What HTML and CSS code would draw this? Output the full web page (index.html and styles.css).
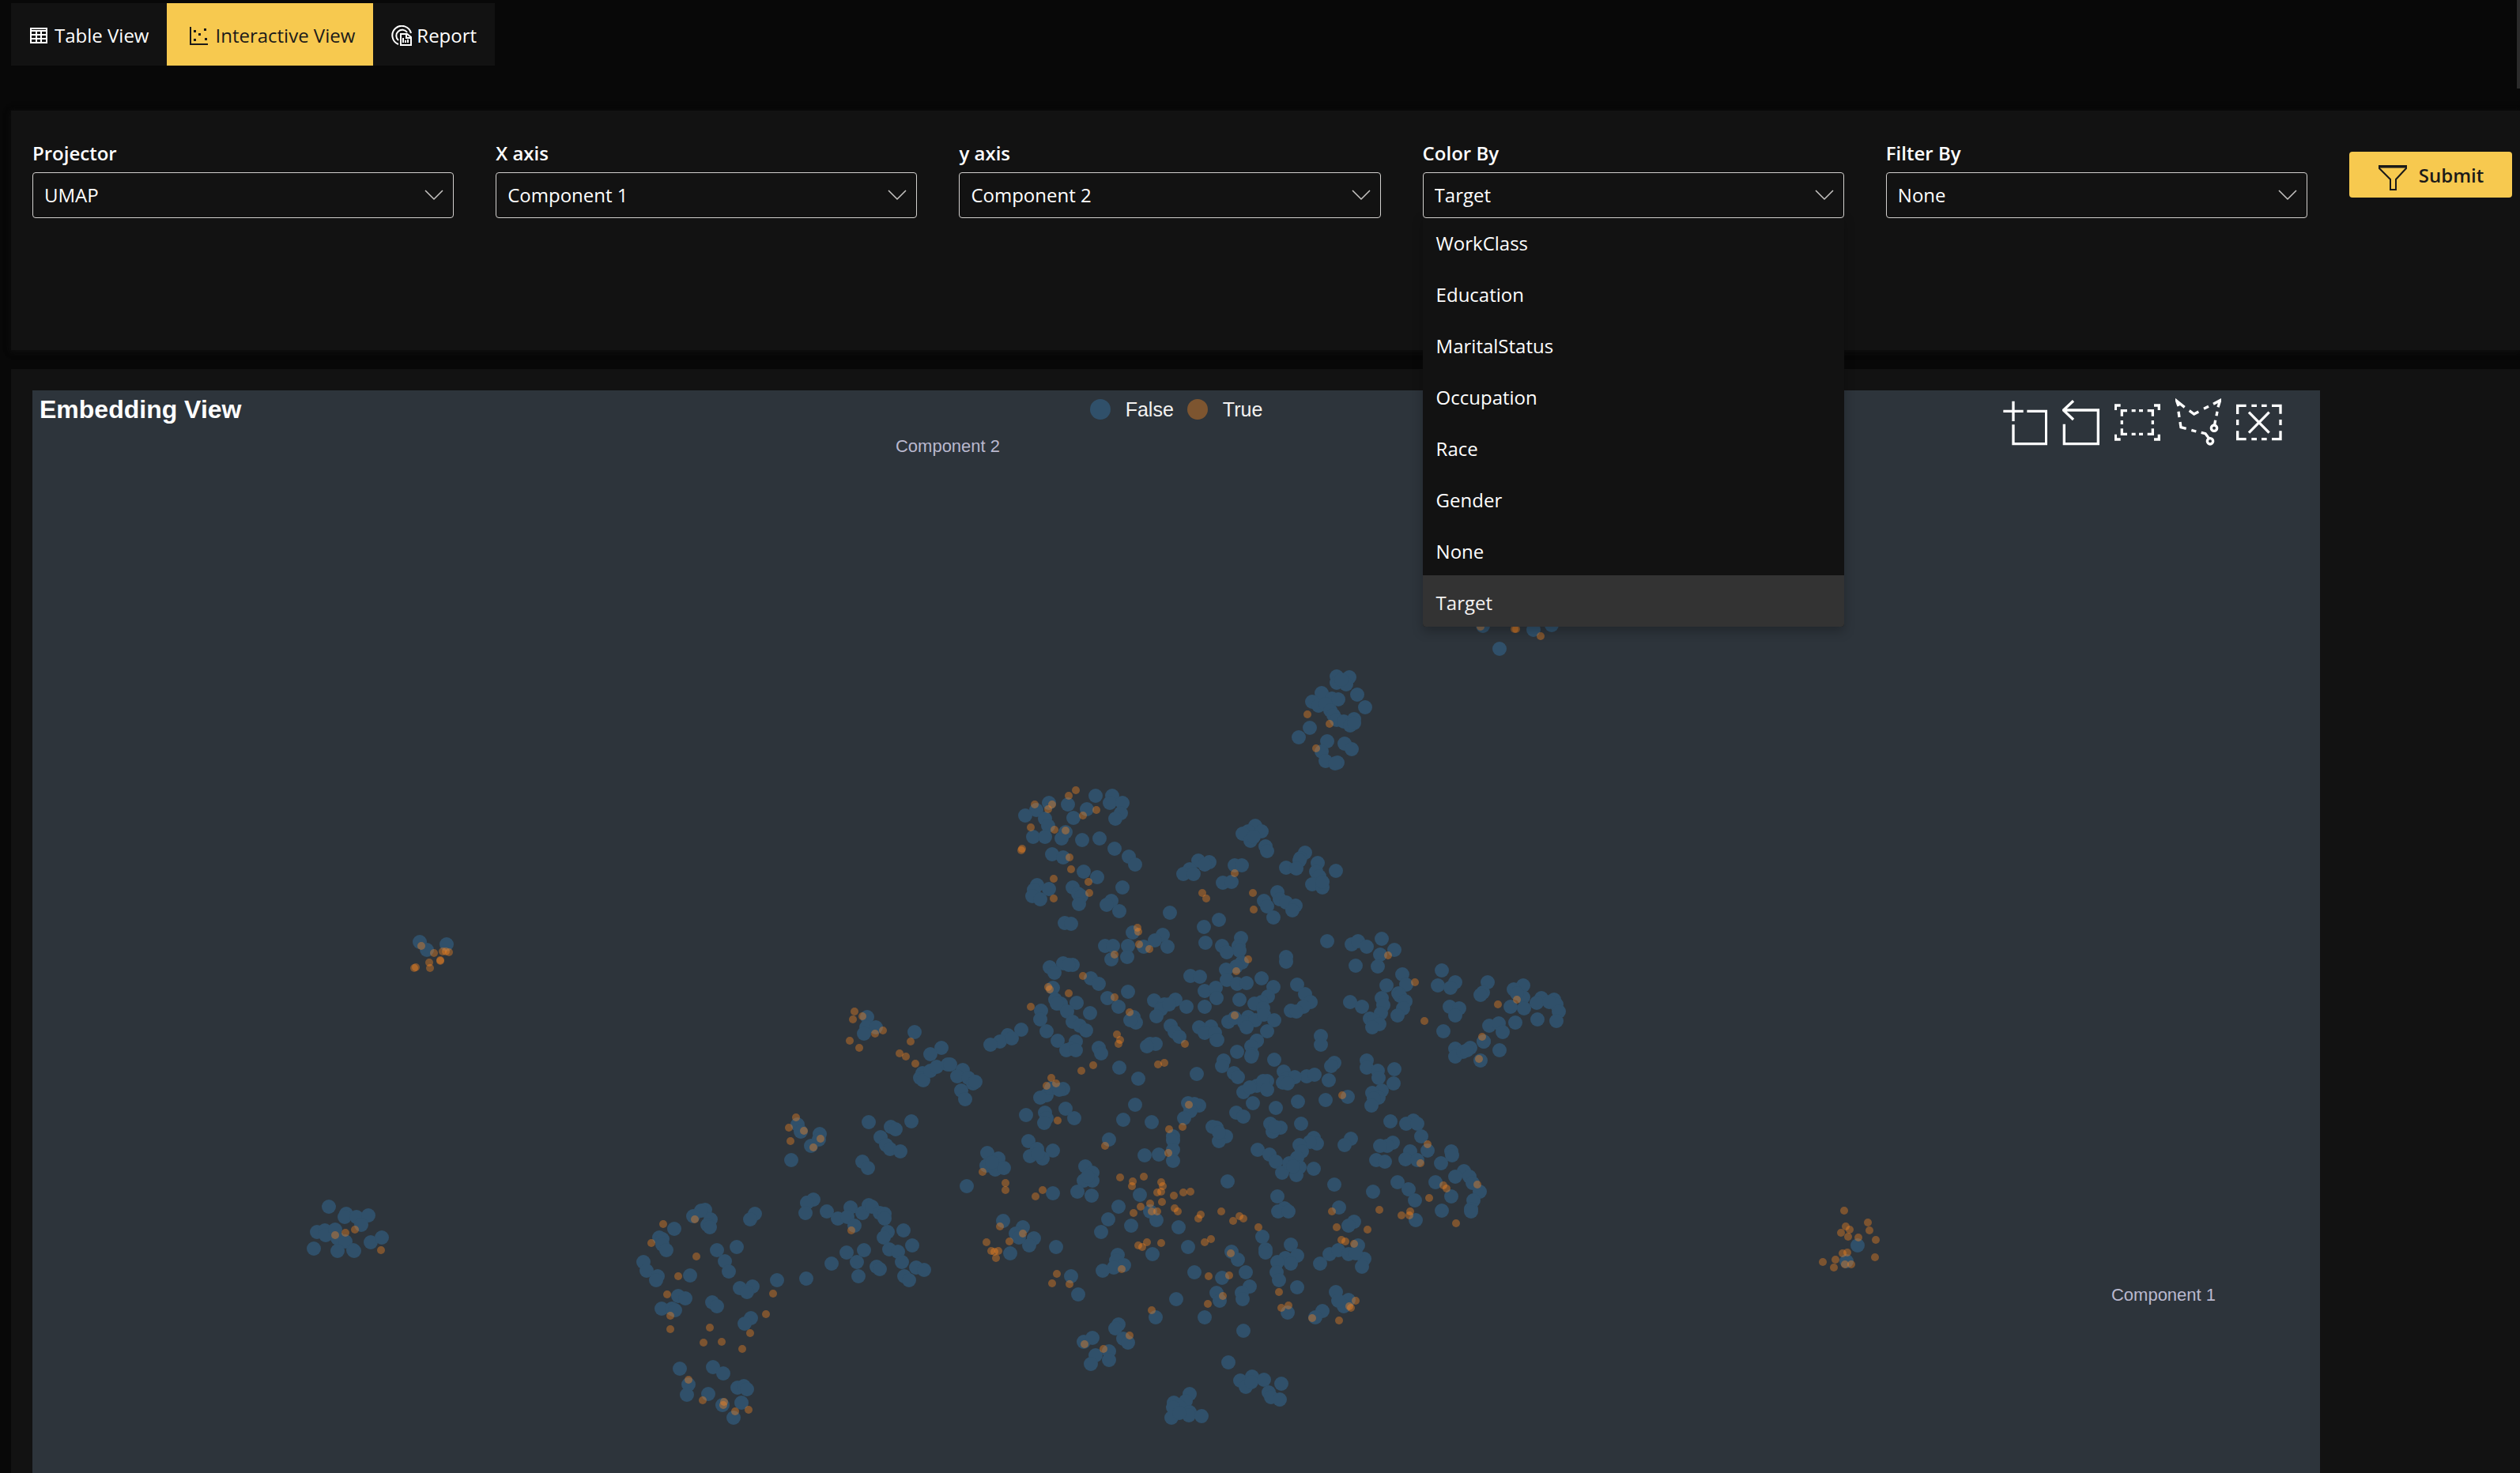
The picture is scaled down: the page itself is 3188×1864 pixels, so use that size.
FILE: index.html
```html
<!DOCTYPE html>
<html lang="en">
<head>
<meta charset="utf-8">
<title>Embedding View</title>
<link rel="stylesheet" href="styles.css">
</head>
<body>
<nav class="tabs" aria-label="Views">
  <button class="tab" type="button">
    <svg class="tab-icon" viewBox="0 0 26 26"><path d="M2 4h20v18H2zM2 7h20M2 12h20M2 17h20M9 7v15M15 7v15" fill="none" stroke="currentColor" stroke-width="2"/></svg>
    Table View
  </button>
  <button class="tab tab-active" type="button">
    <svg class="tab-icon tab-icon-wide" viewBox="-2 0 32 26"><path d="M5 2v22h22" fill="none" stroke="currentColor" stroke-width="2"/><path d="M9 6h3v3H9zM22 4h3v3h-3zM15 10h3v3h-3zM9 17h3v3H9zM23 16h3v3h-3z" fill="currentColor"/></svg>
    Interactive View
  </button>
  <button class="tab" type="button">
    <svg class="tab-icon" viewBox="0 0 26 26"><g fill="none" stroke="currentColor" stroke-width="2"><path d="M9 24A12 12 0 1 1 25 10"/><path d="M9 19A7.500 7.500 0 1 1 20 9"/><path d="M12 11h8l5 4v10H12z"/><path d="M19 11v5h6M15 22v-6M18 22v-3M21 22v-4"/></g></svg>
    Report
  </button>
</nav>

<form class="panel controls">
  <div class="field">
    <label for="projector">Projector</label>
    <div class="select"><select id="projector"><option>UMAP</option></select><svg viewBox="0 0 24 14"><path d="M1 1l11 11L23 1"/></svg></div>
  </div>
  <div class="field">
    <label for="x-axis">X axis</label>
    <div class="select"><select id="x-axis"><option>Component 1</option></select><svg viewBox="0 0 24 14"><path d="M1 1l11 11L23 1"/></svg></div>
  </div>
  <div class="field">
    <label for="y-axis">y axis</label>
    <div class="select"><select id="y-axis"><option>Component 2</option></select><svg viewBox="0 0 24 14"><path d="M1 1l11 11L23 1"/></svg></div>
  </div>
  <div class="field">
    <label for="color-by">Color By</label>
    <div class="select"><select id="color-by"><option>Target</option></select><svg viewBox="0 0 24 14"><path d="M1 1l11 11L23 1"/></svg>
      <ul class="menu" role="listbox" aria-label="Color By">
        <li role="option">WorkClass</li>
        <li role="option">Education</li>
        <li role="option">MaritalStatus</li>
        <li role="option">Occupation</li>
        <li role="option">Race</li>
        <li role="option">Gender</li>
        <li role="option">None</li>
        <li role="option" aria-selected="true">Target</li>
      </ul>
    </div>
  </div>
  <div class="field">
    <label for="filter-by">Filter By</label>
    <div class="select"><select id="filter-by"><option>None</option></select><svg viewBox="0 0 24 14"><path d="M1 1l11 11L23 1"/></svg></div>
  </div>
  <button class="submit" type="submit">
    <svg viewBox="0 0 38 34"><path d="M2 2h34v3L23 19v13h-7V19L2 5z" fill="none" stroke="currentColor" stroke-width="2"/><path d="M1 3h36" stroke="currentColor" stroke-width="3"/></svg>
    Submit
  </button>
</form>

<main class="panel view">
  <section class="chart" aria-labelledby="chart-title">
    <svg class="plot" viewBox="0 0 2894 1370" role="img" aria-label="Scatter plot of component 1 against component 2">
      <g id="series-false" class="series-false"></g>
      <g id="series-true" class="series-true"></g>
      <text class="axis-name" x="1158" y="78" text-anchor="middle">Component 2</text>
      <text class="axis-name" x="2696" y="1152" text-anchor="middle">Component 1</text>
    </svg>
    <header class="chart-head">
      <h1 id="chart-title">Embedding View</h1>
      <div class="legend">
        <span class="key"><i class="dot dot-false"></i>False</span>
        <span class="key"><i class="dot dot-true"></i>True</span>
      </div>
      <div class="toolbox">
        <button type="button" aria-label="Zoom"><svg width="56" height="60" viewBox="159 72 168 180"><path d="M160 121h76M198 83v76M250 121h73v124H198v-73"/></svg></button>
        <button type="button" aria-label="Zoom reset"><svg width="47" height="60" viewBox="386 72 141 180"><path d="M428 82l-38 35 38 36M390 117h132v128H393v-75"/></svg></button>
        <button type="button" aria-label="Box select"><svg width="58" height="60" viewBox="586 72 174 180"><path d="M590 117V99h19M736 99h19v18M755 209v19h-19M609 228h-19v-19M614 140v-21h20M711 119h20v21M731 187v21h-20M634 208h-20v-21M651 119h15M679 119h15M651 208h15M679 208h15M614 156v15M731 156v15"/></svg></button>
        <button type="button" aria-label="Lasso select"><svg width="58" height="60" viewBox="817 72 174 180"><path d="M829 102l-7-20 30 24M870 119l18 13 17-9M925 112l18-9M961 94l26-14-8 26M976 122l-3 17M969 155l-3 17M829 122l3 22M835 162l3 20 20 5M878 193l18 5M915 202l16 4 15 20"/><circle cx="964" cy="185" r="11"/><circle cx="949" cy="235" r="11"/></svg></button>
        <button type="button" aria-label="Clear selection"><svg width="58" height="60" viewBox="1049 72 174 180"><path d="M1054 132v-32h33M1184 100h33v31M1217 196v31h-33M1087 227h-33v-31M1107 100h20M1145 100h20M1107 227h20M1145 227h20M1054 153v21M1217 153v21M1097 125l77 78M1174 125l-77 78"/></svg></button>
      </div>
    </header>
  </section>
</main>
<script src="plot.js"></script>
</body>
</html>
```
FILE: styles.css
```css
* { box-sizing: border-box; }

body {
  margin: 0;
  padding: 4px 0 0 14px;
  background: #080808;
  color: #fff;
  font: 24px/32px "Open Sans", "Noto Sans", sans-serif;
  overflow-x: hidden;
}

body::after {
  content: "";
  position: fixed;
  top: 0;
  right: 0;
  width: 4px;
  height: 112px;
  background: #2b2b2b;
}

button, select { font: inherit; color: inherit; }

.tabs { display: flex; margin-bottom: 57px; }

.tab {
  display: flex;
  align-items: center;
  gap: 6px;
  height: 79px;
  padding: 2px 23px 0;
  border: 0;
  background: #121212;
}

.tab-active { background: #f7c94f; color: #1b1a19; }
.tab-icon { width: 26px; height: 26px; }
.tab-icon-wide { width: 32px; }

.panel { background: #121212; }

.controls {
  display: flex;
  align-items: flex-start;
  gap: 53px;
  height: 303px;
  margin-bottom: 24px;
  padding: 36px 10px 0 27px;
  box-shadow: 0 3px 7px #0d0d0d, 0 0 8px #0d0d0d;
}

.field { flex: 1; min-width: 0; }
.field label { display: block; height: 42px; font-weight: 600; line-height: 36px; }

.select { position: relative; display: grid; align-items: center; }
.select > select, .select > svg { position: relative; z-index: 3; grid-area: 1 / 1; }

.select select {
  width: 100%;
  height: 58px;
  padding: 0 14px;
  border: 1px solid #d2d0ce;
  border-radius: 4px;
  background: #121212;
  appearance: none;
}

.select > svg {
  justify-self: end;
  width: 24px;
  height: 14px;
  margin-right: 13px;
  fill: none;
  stroke: #c8c6c4;
  stroke-width: 1.5;
  pointer-events: none;
}

.menu {
  position: absolute;
  top: 55px;
  left: 0;
  z-index: 2;
  width: 100%;
  margin: 0;
  padding: 0;
  list-style: none;
  border-radius: 0 0 4px 4px;
  background: #121212;
  box-shadow: 0 6px 14px rgba(0, 0, 0, 0.25);
  overflow: hidden;
}

.menu li { height: 65px; padding: 3px 17px 0; line-height: 64px; }
.menu li[aria-selected] { background: #333; color: #f3f2f1; }

.submit {
  display: flex;
  align-items: center;
  justify-content: center;
  gap: 14px;
  width: 206px;
  height: 58px;
  margin-top: 16px;
  padding: 2px 0 0;
  border: 0;
  border-radius: 4px;
  background: #f7c94f;
  color: #1b1a19;
  font-weight: 600;
}
.submit svg { width: 38px; height: 34px; margin-top: 6px; }

.view { padding: 27px 253px 0 27px; }

.chart {
  display: grid;
  background: #2d343b;
  font-family: "Liberation Sans", Arial, sans-serif;
}
.plot, .chart-head { grid-area: 1 / 1; }
.plot { display: block; width: 100%; }

.chart-head {
  display: grid;
  grid-template-columns: 1fr auto 1fr;
  align-self: start;
  align-items: start;
  padding: 8px 48px 0 9px;
}
.chart-head h1 { margin: 0; font-size: 32px; line-height: 32px; }

.legend {
  display: flex;
  gap: 17px;
  margin-left: 39px;
  font-size: 25px;
  line-height: 32px;
  color: #f3f2f1;
}
.key { display: flex; align-items: center; gap: 19px; }
.dot { width: 26px; height: 26px; border-radius: 50%; }
.dot-false { background: #30506a; }
.dot-true { background: #7d5530; }

.toolbox { display: flex; justify-content: flex-end; gap: 19px; padding-top: 2px; }
.toolbox button { display: flex; padding: 0; border: 0; background: none; }
.toolbox svg { fill: none; stroke: #fff; stroke-width: 10; }

.series-false { fill: #30506a; }
.series-true { fill: #ff8a20; fill-opacity: 0.38; }
.axis-name { font-size: 22px; fill: #b9b8ce; }
```
FILE: plot.js
```js
// Embedded samples, grouped by cluster. Each group has its own origin and scale.
const groups = [
  { x: 1159, y: 286, sx: 1.96, sy: 2.8,
    no: "1325,34 1450,47 1496,30 1367,114 963,212 993,216 962,234 985,240 974,225 1013,278 1032,321 926,271 902,301 950,290 966,295 917,317 935,310 947,332 955,350 962,368 980,372 1005,363 996,386 1006,378 895,394 868,429 939,441 982,450 1000,470 926,480 935,511 965,517 959,521 248,660 295,666 364,636 405,636 399,660 432,661 343,684 427,697 414,718 310,713 217,687 190,705 239,716 247,742 290,765 209,782 239,781 281,787 332,791 375,787 412,824 257,843 285,853 446,852 462,878 336,904 368,924 220,951 249,965 212,970 208,991 228,1002 307,961 322,982 330,992 323,1018 432,960 404,1008 392,1022 423,1043 289,1085 303,1090 760,742 743,761 777,762 729,771 748,796 757,780 786,816 789,832 620,865 646,870 636,880 597,895 583,914 608,914 709,882 728,881 680,943 702,942 883,836 873,857 870,865 836,889 862,893 915,874 911,905 961,901 920,922 902,949 927,960 928,940 816,978 783,1009 789,1028 822,1003 837,1013 860,1025 853,1042 805,1067 548,1049 456,1119 531,1127 511,1148 542,1170 388,1168 407,1168 444,1168 484,1171 442,1207 403,1216 671,1074 634,1100 637,1157 678,1168 725,1140 720,1168 722,1185 690,1190 727,1226 714,1240 687,1252 690,1288 938,1151 836,1207 837,1224 1000,1161 1015,1151 1037,1169 1074,1142 1105,1182 1071,1197 1009,1237 1065,1240 285,1229 308,1234 298,1234 251,1244 263,1262 352,1283 373,1303 258,1317 444,1330 393,1353 421,1382 317,1369 264,1358 278,1373 268,1371 294,1400 350,1406 230,1398 228,1428 308,1435 325,1450 244,1469 341,1466 180,1465 147,1484 127,1505 104,1517 157,1494 599,1273 624,1276 776,1282 716,1302 738,1298 635,1327 663,1315 665,1351 806,1313 636,1384 722,1357 791,1347 776,1367 759,1373 780,1390 864,1305 884,1339 897,1367 880,1382 849,1397 862,1400 510,1362 562,1358 535,1374 528,1392 547,1375 590,1383 516,1418 458,1420 465,1438 450,1430 694,1437 709,1422 550,1450 742,1420 733,1440 760,1430 782,1410 808,1431 739,1456 622,1457 651,1452 636,1475 660,1476 665,1500 790,1470 764,1503 1126,1269 1086,1307 1134,1305 1115,1335 1120,1345 1133,1363 1074,1352 1078,1378 1127,1390 1113,1415 1073,1405 1045,1424 1055,1430 1069,1445 1050,1455 995,1366 1025,1384 1224,1253 1214,1308 1257,1297 1244,1317 1336,1295 1325,1332 1319,1340 1424,1307 1402,1321 1425,1349 1410,1335 1394,1384 1427,1389 1470,1352 1458,1369 1502,1358 1508,1375 1514,1400 1508,1434 1490,1365 1243,1384 1267,1390 1256,1414 1405,1438 1460,1428 1341,1449 1365,1442 1373,1472 1226,1469 1327,1507",
    yes: "1319,36 1404,44 1408,45 1468,69 889,346 944,380 912,467 316,615 298,636 213,667 256,665 246,684 366,685 333,705 203,748 263,755 290,759 183,824 181,828 299,853 304,895 260,930 346,942 348,979 260,1000 709,910 630,981 638,1000 755,979 757,1040 469,1102 471,1116 472,1163 497,1180 412,1198 742,1215 714,1258 1089,1202 334,1275 247,1314 250,1322 297,1335 412,1350 203,1382 448,1404 710,1414 1157,1297 1180,1433 1362,1374 1409,1358" },
  { x: 1159, y: 806, sx: 1.96, sy: 2.78,
    no: "560,18 573,34 667,45 923,30 924,62 500,57 514,58 492,67 271,46 315,50 304,75 293,80 315,82 373,72 379,92 764,47 750,68 753,95 750,104 715,86 424,142 470,180 615,163 682,118 678,137 708,160 717,174 808,114 957,126 948,136 943,187 888,171 908,166 831,157 840,177 859,175 829,195 840,198 764,205 790,188 780,188 732,229 790,221 754,266 747,212 1037,117 1036,143 1065,152 1067,177 1105,147 1103,198 1075,222 1051,230 1067,247 1055,250 1049,275 989,245 935,257 867,260 811,284 1257,75 1257,103 1275,86 1294,72 1366,80 1320,118 1327,50 1285,82 463,272 433,325 504,333 594,266 622,275 610,270 600,294 585,320 243,240 227,248 254,215 285,217 275,220 290,286 312,320 193,309 239,301 243,321 237,336 259,433 197,399 219,427 202,454 234,462 222,445 398,394 96,441 123,461 95,486 115,500 137,496 108,475 46,559 340,488 356,512 336,538 356,540 345,525 319,578 354,592 258,585 487,449 521,447 556,384 557,397 557,432 557,469 655,350 665,352 688,384 671,401 670,370 714,300 731,313 797,338 823,354 804,366 810,350 875,339 767,430 796,448 811,473 827,512 905,390 913,410 895,402 870,415 877,436 865,458 845,478 870,492 862,521 855,490 906,498 692,542 998,391 982,415 1096,331 1152,328 1135,338 1163,338 1172,383 1187,434 1101,407 1087,416 1070,418 1145,437 1133,464 1163,466 1061,466 1082,472 1247,437 1249,451 1221,477 1277,505 1257,525 1291,526 1300,548 1318,577 1302,610 1296,640 1295,648 1208,545 1246,596 1224,645 1114,544 1140,569 1156,608 1158,679 1052,577 957,552 968,634 1006,684 991,697 474,590 422,630 395,676 378,719 453,697 500,647 516,679 570,704 593,772 505,797 815,595 833,637 817,649 842,648 779,738 785,780 785,793 848,764 835,812 865,804 816,825 849,832 814,862 819,889 702,790 717,816 737,863 678,880 609,861 746,913 728,933 730,955 665,934 672,963 636,1020 564,956 514,1020 865,916 841,1004 921,831 945,797 967,783 991,797 1016,768 1030,814 1025,843 1010,795 961,931 991,960 980,981 967,962 927,998 909,1021 731,1067 136,680 184,703 167,726 211,743 200,768 175,740 152,796 267,774 420,801 416,819 436,838 409,845 383,855 304,875 322,939 422,1046 413,1060 433,1096 444,1109 335,1106 357,1093 398,1140 365,1154 397,1169 352,1185 693,1180 724,1244 753,1229 783,1241 737,1264 750,1248 826,1254 794,1285 800,1300 821,1308 597,1291 559,1320 588,1315 573,1335 557,1338 597,1354 553,1373 595,1366 627,1368 573,1358",
    yes: "418,26 425,45 421,57 587,58 1323,34 1316,111 358,133 330,153 535,125 520,132 254,179 267,198 243,207 977,240 596,272 270,329 546,360 581,351 389,418 544,442 1187,411 1171,477 85,510 141,549 142,572 233,574 216,594 426,529 484,525 457,542 455,558 527,546 532,560 517,581 528,578 559,591 583,580 600,579 530,614 499,621 477,632 503,647 518,647 560,638 569,647 459,654 626,659 620,672 676,649 722,665 732,672 705,680 769,704 650,746 636,757 492,757 471,768 480,774 528,759 1312,553 1227,557 1234,567 1192,600 1068,643 1124,661 1145,647 1143,661 1259,689 950,649 963,702 1038,713 975,747 984,752 1006,763 127,700 184,726 94,755 151,753 105,786 113,790 124,787 118,812 268,867 256,901 300,904 430,851 700,795 695,874 644,877 681,945 642,974 504,994 819,932 842,978 825,986 901,1023 969,1032 1009,963 993,982 998,986 448,1083 337,1115 385,1132" },
  { x: 719, y: 746, sx: 3, sy: 2.613,
    no: "1010,122 1008,157 1043,156 1000,178 1190,172 1293,224 1251,245 1221,309 1212,325 1224,332 1251,301 1276,287 1317,279 1327,280 1373,298 1354,318 1395,324 1413,342 1421,337 1367,367 1383,394 1018,471 1180,467 1102,487 1120,495 1061,521 1084,545 1097,560 1137,567 994,602 1013,622 746,479 758,501 831,510 828,527 798,549 723,595 808,727 783,737 777,770 858,766 900,789 949,753 937,783 964,813 993,771 1017,744 1028,749 1058,771 1077,774 1077,790 1088,834 1075,851 1148,828 1183,879 1096,890 1128,900 1143,932 1198,951 1226,960 1152,981 1171,994 932,902 1000,893 972,933 1046,949 1060,957 977,979 876,937 780,989 668,994 585,773 568,793 395,760 382,764 350,781 417,793 404,809 415,817 280,823 222,851 234,858 234,876 250,893 517,883 442,893 471,930 486,964 162,933 173,962 216,979 211,992 340,978 295,1046 320,1052 232,1086 270,1086 283,1093 424,1066 440,1079 529,1020 575,1013 555,1033 570,1118 547,1137 300,1286 332,1337 327,1371 425,1281 464,1301 409,1370 462,1407 518,1348 542,1344 554,1354 535,1398 504,1448",
    yes: "962,104 957,130 993,121 1042,178 1072,168 944,201 982,224 1176,203 1133,242 1158,254 1195,278 741,454 715,489 771,500 719,532 834,526 806,554 952,829 238,807 358,793 192,871 363,915 293,979 252,1040 263,1110 264,1156 413,1151 390,1200 458,1197 568,1169 536,1219 626,1104 655,1037 333,1323 388,1391 467,1395 466,1407 511,1428 562,1422" },
  { x: 329, y: 666, sx: 3, sy: 3,
    no: "484,97 510,125 585,105 137,1101 203,1128 197,1140 242,1139 289,1134 261,1170 93,1197 124,1190 127,1210 162,1187 170,1222 202,1234 80,1261 171,1269 231,1267 235,1269 296,1237 339,1218",
    yes: "488,110 538,138 569,133 583,133 595,136 561,166 562,167 518,174 522,196 463,195 469,192 161,1210 201,1200 238,1189 335,1265" },
  { x: 2239, y: 1006, sx: 3, sy: 3,
    no: "211,228 167,289",
    yes: "159,96 249,140 256,170 164,156 181,168 146,181 174,195 213,199 278,208 277,272 154,257 172,256 127,282 79,292 119,313 163,300 185,300" }
];

function draw(target, points, group, radius) {
  for (const pair of points.split(" ")) {
    const [px, py] = pair.split(",").map(Number);
    const dot = document.createElementNS("http://www.w3.org/2000/svg", "circle");
    dot.setAttribute("cx", Math.round(group.x + px / group.sx));
    dot.setAttribute("cy", Math.round(group.y + py / group.sy));
    dot.setAttribute("r", radius);
    target.append(dot);
  }
}

for (const group of groups) {
  draw(document.getElementById("series-false"), group.no, group, 9);
  draw(document.getElementById("series-true"), group.yes, group, 5);
}
```
